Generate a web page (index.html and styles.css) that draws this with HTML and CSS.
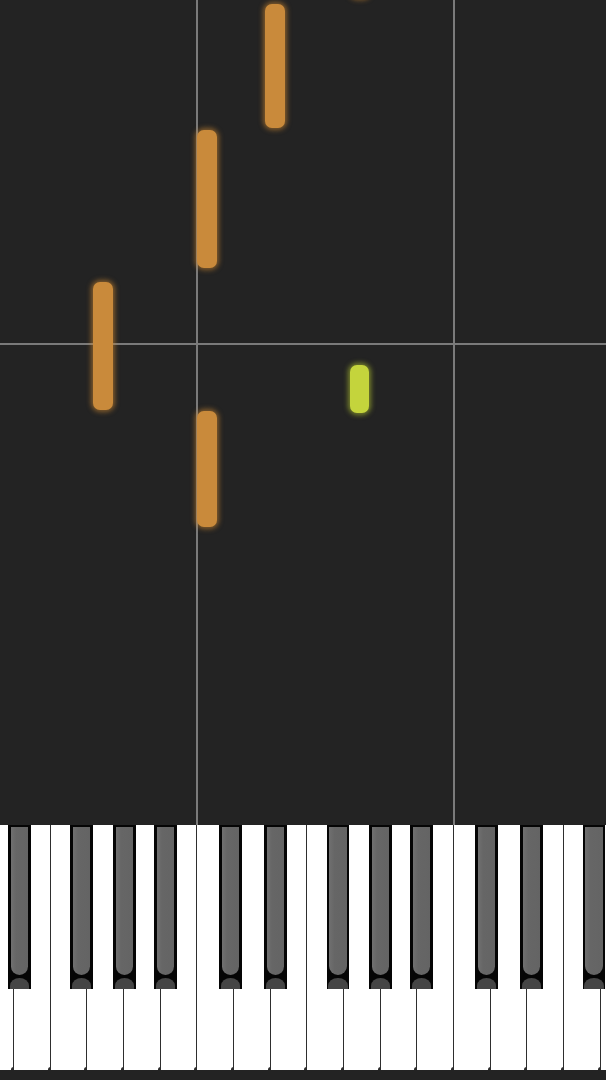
FILE: index.html
```html
<!DOCTYPE html>
<html lang="en">
<head>
    <meta charset="UTF-8">
    <meta name="viewport" content="width=device-width, initial-scale=1.0">
    <title>Piano Roll</title>
    <link rel="stylesheet" href="styles.css">
</head>
<body>
    <div class="roll">
        <div class="grid-v" style="left: 196px"></div>
        <div class="grid-v" style="left: 453px"></div>
        <div class="grid-h" style="top: 343px"></div>

        <div class="note" style="left: 350px; top: -30px; height: 28px"></div>
        <div class="note" style="left: 265px; top: 4px; height: 124px"></div>
        <div class="note" style="left: 197px; top: 130px; height: 138px"></div>
        <div class="note" style="left: 93px; top: 282px; height: 128px"></div>
        <div class="note" style="left: 197px; top: 411px; height: 116px"></div>
        <div class="note note-green" style="left: 350px; top: 365px; height: 48px"></div>
    </div>

    <div class="keyboard">
        <div class="white-keys">
            <div class="white-key"></div>
            <div class="white-key"></div>
            <div class="white-key"></div>
            <div class="white-key"></div>
            <div class="white-key"></div>
            <div class="white-key"></div>
            <div class="white-key"></div>
            <div class="white-key"></div>
            <div class="white-key"></div>
            <div class="white-key"></div>
            <div class="white-key"></div>
            <div class="white-key"></div>
            <div class="white-key"></div>
            <div class="white-key"></div>
            <div class="white-key"></div>
            <div class="white-key"></div>
            <div class="white-key"></div>
            <div class="white-key"></div>
        </div>

        <!-- teclas pretas sobre as brancas -->
        <div class="black-key" style="left: 8.3px"><div class="black-top"></div><div class="black-front"></div></div>
        <div class="black-key" style="left: 70.3px"><div class="black-top"></div><div class="black-front"></div></div>
        <div class="black-key" style="left: 113.3px"><div class="black-top"></div><div class="black-front"></div></div>
        <div class="black-key" style="left: 154.3px"><div class="black-top"></div><div class="black-front"></div></div>
        <div class="black-key" style="left: 219px"><div class="black-top"></div><div class="black-front"></div></div>
        <div class="black-key" style="left: 264.3px"><div class="black-top"></div><div class="black-front"></div></div>
        <div class="black-key" style="left: 326.7px"><div class="black-top"></div><div class="black-front"></div></div>
        <div class="black-key" style="left: 369.3px"><div class="black-top"></div><div class="black-front"></div></div>
        <div class="black-key" style="left: 410px"><div class="black-top"></div><div class="black-front"></div></div>
        <div class="black-key" style="left: 475.3px"><div class="black-top"></div><div class="black-front"></div></div>
        <div class="black-key" style="left: 520.3px"><div class="black-top"></div><div class="black-front"></div></div>
        <div class="black-key" style="left: 582.7px"><div class="black-top"></div><div class="black-front"></div></div>
    </div>

    <div class="base"></div>
</body>
</html>
```

FILE: styles.css
```css
body {
    margin: 0;
    padding: 0;
    background-color: #232323;
    font-family: 'Liberation Sans', Arial, sans-serif;
    overflow: hidden;
}

.roll {
    position: relative;
    height: 825px;
    background-color: #232323;
    overflow: hidden;
}

.grid-v {
    position: absolute;
    top: 0;
    bottom: 0;
    width: 2px;
    background-color: #7a7a7a;
}

.grid-h {
    position: absolute;
    left: 0;
    right: 0;
    height: 2px;
    background-color: #7a7a7a;
}

.note {
    position: absolute;
    width: 20px;
    border-radius: 7px;
    background-color: #c98a3b;
    box-shadow: 0 0 5px 2px rgba(214, 140, 50, 0.55);
}

.note-green {
    width: 19px;
    background-color: #c4d43c;
    box-shadow: 0 0 5px 2px rgba(190, 210, 50, 0.55);
}

.keyboard {
    position: relative;
    height: 245px;
    background-color: #fff;
    overflow: hidden;
}

.white-keys {
    display: flex;
    height: 100%;
    margin-left: -22.667px;
}

.white-key {
    position: relative;
    flex: 0 0 36.667px;
    box-sizing: border-box;
    height: 100%;
    background-color: #fff;
    border-right: 1px solid #2e2e2e;
}

/* pezinho na base da linha */
.white-key::after {
    content: '';
    position: absolute;
    right: -3px;
    bottom: 0;
    width: 5px;
    height: 3px;
    background-color: #2e2e2e;
    border-radius: 3px 3px 0 0;
}

.black-key {
    position: absolute;
    top: 0;
    width: 22.7px;
    height: 164px;
    box-sizing: border-box;
    padding: 2px 2.5px 0;
    background-color: #050505;
    display: flex;
    flex-direction: column;
}

.black-top {
    height: 148px;
    background: linear-gradient(to right, #707070 0%, #666 30%, #646464 100%);
    border-radius: 0 0 9px 9px;
}

.black-front {
    margin: 3px -1px 0;
    flex: 1;
    background-color: #454545;
    border-radius: 50% 50% 0 0 / 8px 8px 0 0;
}

.base {
    height: 10px;
    background-color: #232323;
}
```
